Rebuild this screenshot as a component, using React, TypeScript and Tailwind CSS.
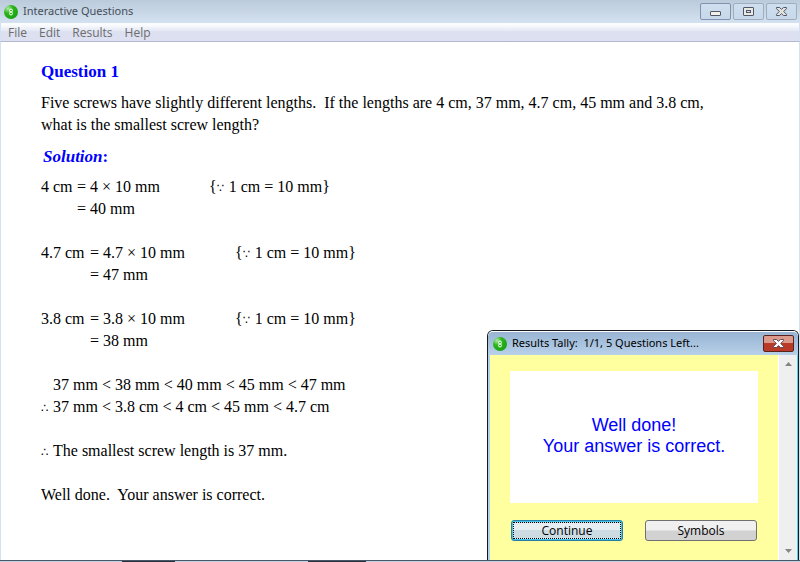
import type { ReactNode } from "react";

function AppIcon() {
  return (
    <svg width="14" height="14" viewBox="0 0 14 14" aria-hidden="true" className="shrink-0">
      <defs>
        <radialGradient id="ball" cx="28%" cy="25%" r="75%">
          <stop offset="0" stopColor="#b2eca8" />
          <stop offset="0.45" stopColor="#2fb41e" />
          <stop offset="1" stopColor="#1ba514" />
        </radialGradient>
      </defs>
      <circle cx="7" cy="7" r="7" fill="url(#ball)" />
      <circle cx="7" cy="5.5" r="1.5" fill="none" stroke="#f4fff2" strokeWidth="1" />
      <circle cx="7" cy="8.5" r="1.5" fill="none" stroke="#f4fff2" strokeWidth="1" />
    </svg>
  );
}

function CaptionButton({ label, strong, children }: { label: string; strong?: boolean; children: ReactNode }) {
  return (
    <button
      type="button"
      aria-label={label}
      className={`flex h-[17px] w-[31px] items-center justify-center rounded-[2px] border bg-linear-to-b from-[#cfdfee] to-[#c6d8ea] ${
        strong ? "border-[#8391b0]" : "border-[#9fadbf]"
      }`}
    >
      {children}
    </button>
  );
}

function CrossGlyph({ outline, fill }: { outline: string; fill: string }) {
  return (
    <svg width="13" height="9" viewBox="0 0 13 9" aria-hidden="true">
      <path
        d="M1.5 0.5 H4.5 L6.5 2.3 L8.5 0.5 H11.5 V1.7 L8.7 4.5 L11.5 7.3 V8.5 H8.5 L6.5 6.7 L4.5 8.5 H1.5 V7.3 L4.3 4.5 L1.5 1.7 Z"
        fill={fill}
        stroke={outline}
        strokeLinejoin="round"
      />
    </svg>
  );
}

function Sign({ children }: { children: string }) {
  return <span className="inline-block w-3 text-[12px] leading-none">{children}</span>;
}

function Conversion({ from, product, result, wide }: { from: string; product: string; result: string; wide?: boolean }) {
  return (
    <div className={`mb-[22px] grid ${wide ? "grid-cols-[49px_145px_auto]" : "grid-cols-[36px_132px_auto]"}`}>
      <span className="whitespace-nowrap">{from}</span>
      <span>= {product}</span>
      <span>
        {"{"}
        <Sign>∵</Sign>1 cm = 10 mm{"}"}
      </span>
      <span className="col-start-2">= {result}</span>
    </div>
  );
}

function ResultsTally() {
  return (
    <section
      aria-label="Results Tally"
      className="absolute right-px bottom-[2px] flex h-[230px] w-[312px] flex-col rounded-t-[6px] border border-b-0 border-[#15181c] bg-[#b5d0ea] text-black"
    >
      <header className="flex h-6 items-center gap-[5px] rounded-t-[5px] border-t border-white bg-linear-to-b from-[#98b4d2] to-[#b8d1ea] pr-1 pl-[5px] font-['Noto_Sans','Open_Sans',sans-serif] text-[11px]">
        <AppIcon />
        <h2 className="grow whitespace-pre">Results Tally:  1/1, 5 Questions Left...</h2>
        <button
          type="button"
          aria-label="Close"
          className="flex h-[17px] w-[31px] items-center justify-center rounded-[2px] border border-[#5a2320] bg-linear-to-b from-[#dc9a8d] from-45% to-[#b93a26] to-50%"
        >
          <CrossGlyph outline="#5c4650" fill="#ffffff" />
        </button>
      </header>
      <div className="flex grow border-r border-l-2 border-r-[#4fd0f3] border-l-[#b5d0ea]">
        <div className="grow bg-[#ffff9f] px-5 pt-4">
          <p className="flex h-[132px] items-center justify-center bg-white pb-[2px] text-center font-['Liberation_Sans',Arial,sans-serif] text-[18px] leading-[21px] text-[#0000ff]">
            Well done!
            <br />
            Your answer is correct.
          </p>
          <div className="flex justify-between px-px pt-[17px] font-['Open_Sans','Noto_Sans',sans-serif] text-[12px]">
            <button
              type="button"
              className="h-[21px] w-28 rounded-[3px] border border-[#2a7fa5] bg-[#46c4ee] p-px"
            >
              <span className="flex h-full items-center justify-center border border-dotted border-black bg-linear-to-b from-[#e6eef2] from-45% to-[#cddbe2] to-50%">
                Continue
              </span>
            </button>
            <button
              type="button"
              className="flex h-[21px] w-28 items-center justify-center rounded-[3px] border border-[#707070] bg-linear-to-b from-[#f0f0f0] from-45% to-[#d2d2d2] to-55%"
            >
              Symbols
            </button>
          </div>
        </div>
        <div className="flex w-[19px] flex-col justify-between border-l border-white bg-[#efefef]">
          <button type="button" aria-label="Scroll up" className="flex h-[18px] items-center justify-center">
            <svg width="7" height="4" viewBox="0 0 7 4" aria-hidden="true">
              <path d="M0 4 L3.5 0 L7 4Z" fill="#858585" />
            </svg>
          </button>
          <button type="button" aria-label="Scroll down" className="flex h-[18px] items-center justify-center">
            <svg width="7" height="4" viewBox="0 0 7 4" aria-hidden="true">
              <path d="M0 0 L3.5 4 L7 0Z" fill="#858585" />
            </svg>
          </button>
        </div>
      </div>
    </section>
  );
}

export default function App() {
  return (
    <div className="relative flex min-h-screen flex-col bg-white">
      <header className="flex h-[23px] items-center gap-[5px] bg-linear-to-b from-[#bccbdb] to-[#d3e1f0] pr-[3px] pl-1 font-['Noto_Sans','Open_Sans',sans-serif] text-[11px] text-[#454d57]">
        <AppIcon />
        <h1 className="grow">Interactive Questions</h1>
        <div className="flex gap-[2px]">
          <CaptionButton label="Minimize" strong>
            <svg width="11" height="11" viewBox="0 0 11 11" aria-hidden="true">
              <rect x="0.5" y="5.5" width="10" height="4" rx="0.5" fill="#f1f1ec" stroke="#535666" />
            </svg>
          </CaptionButton>
          <CaptionButton label="Maximize">
            <svg width="11" height="9" viewBox="0 0 11 9" aria-hidden="true">
              <rect x="0.5" y="0.5" width="10" height="8" rx="0.5" fill="#e9e9e4" stroke="#535666" />
              <rect x="3.5" y="3.5" width="4" height="2" fill="#cfdfee" stroke="#535666" />
            </svg>
          </CaptionButton>
          <CaptionButton label="Close">
            <CrossGlyph outline="#535666" fill="#e3e3de" />
          </CaptionButton>
        </div>
      </header>
      <nav
        aria-label="Main menu"
        className="flex h-[19px] items-center gap-3 border-x border-b border-x-[#d3e1f0] border-b-[#b3b8d0] bg-linear-to-b from-[#fbfcfe] from-10% via-[#e4e9f4] via-42% to-[#dce0f1] to-48% pt-px pl-[7px] font-['Open_Sans','Noto_Sans',sans-serif] text-[12px] text-[#6d6d6d]"
      >
        <button type="button">File</button>
        <button type="button">Edit</button>
        <button type="button">Results</button>
        <button type="button">Help</button>
      </nav>
      <main className="grow border-x border-[#d3e1f0] px-10 pt-[19px] font-['Liberation_Serif','Times_New_Roman','DejaVu_Sans',serif] text-[16px] leading-[22px] text-black">
        <h2 className="mb-[9px] text-[17px] font-bold text-[#0000ff]">Question 1</h2>
        <p className="mb-[10px] whitespace-pre-wrap">
          Five screws have slightly different lengths.  If the lengths are 4 cm, 37 mm, 4.7 cm, 45 mm and 3.8 cm,{" "}
          <br />
          what is the smallest screw length?
        </p>
        <h3 className="mb-2 pl-[2px] text-[17px] font-bold text-[#0000ff]">
          <em>Solution</em>:
        </h3>
        <Conversion from="4 cm" product="4 × 10 mm" result="40 mm" />
        <Conversion wide from="4.7 cm" product="4.7 × 10 mm" result="47 mm" />
        <Conversion wide from="3.8 cm" product="3.8 × 10 mm" result="38 mm" />
        <p className="pl-3">37 mm &lt; 38 mm &lt; 40 mm &lt; 45 mm &lt; 47 mm</p>
        <p className="mb-[22px]">
          <Sign>∴</Sign>37 mm &lt; 3.8 cm &lt; 4 cm &lt; 45 mm &lt; 4.7 cm
        </p>
        <p className="mb-[22px]">
          <Sign>∴</Sign>The smallest screw length is 37 mm.
        </p>
        <p className="whitespace-pre-wrap">Well done.  Your answer is correct.</p>
      </main>
      <footer className="flex h-[2px] border-t border-[#48586c] bg-[#c3d0de] pl-[122px]">
        <span className="w-[53px] bg-[#2b2f38]" />
        <span className="ml-[133px] w-[58px] bg-[#2b2f38]" />
      </footer>
      <ResultsTally />
    </div>
  );
}
